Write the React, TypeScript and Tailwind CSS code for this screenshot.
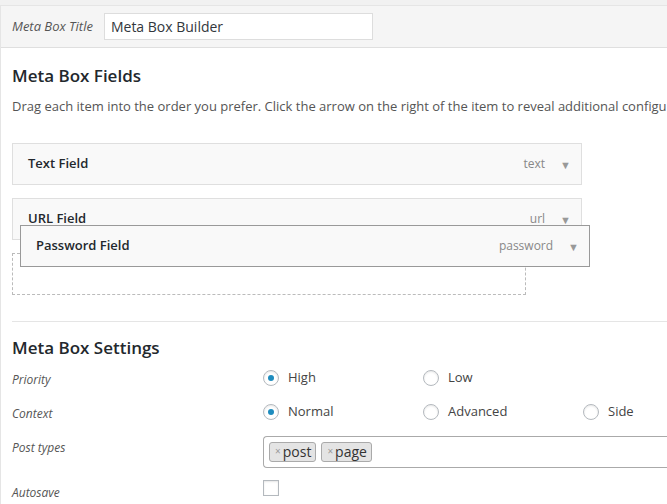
import React from "react";

const fieldItems = [
    { label: "Text Field", type: "text" },
    { label: "URL Field", type: "url" },
];

function Arrow() {
    return <span className="text-[11px] leading-none text-[#999]">▼</span>;
}

function FieldItem({ label, type, dragging }: { label: string; type: string; dragging?: boolean }) {
    return (
        <div
            className={
                "h-[42px] w-[570px] flex items-center justify-between bg-[#f9f9f9] border pl-[15px] pr-[10px] " +
                (dragging ? "border-[#999]" : "border-[#dfdfdf] mb-[13px]")
            }
        >
            <span className="text-[13px] font-semibold text-[#23282d]">{label}</span>
            <span className="flex items-center gap-[15px]">
                <span className="text-[12px] text-[#888]">{type}</span>
                <Arrow />
            </span>
        </div>
    );
}

function Radio({ label, checked }: { label: string; checked?: boolean }) {
    return (
        <label className="w-[160px] flex-none flex items-center gap-[9px]">
            <span className="w-4 h-4 flex-none rounded-full border border-[#b4b9be] bg-white shadow-[inset_0_1px_2px_rgba(0,0,0,0.1)] flex items-center justify-center">
                {checked && <span className="w-[6px] h-[6px] rounded-full bg-[#1e8cbe]" />}
            </span>
            <span className="text-[13px] text-[#444]">{label}</span>
        </label>
    );
}

function Tag({ text }: { text: string }) {
    return (
        <span className="h-[20px] flex items-center gap-[2px] pl-[5px] pr-[4px] bg-[#e4e4e4] border border-[#aaa] rounded-[3px]">
            <span className="text-[10px] text-[#999]">×</span>
            <span className="text-[14px] text-[#333] leading-none">{text}</span>
        </span>
    );
}

function Label({ children, className }: { children: React.ReactNode; className?: string }) {
    return <div className={"w-[251px] flex-none text-[12px] italic text-[#555] leading-[18px] " + (className || "")}>{children}</div>;
}

export default function App() {
    return (
        <div className="w-[667px] h-[504px] overflow-hidden bg-[#f1f1f1] pt-[5px] font-['Open_Sans',sans-serif]">
            <div className="h-full bg-white border-l border-t border-[#e5e5e5]">
                <div className="h-[42px] bg-[#f5f5f5] border-b border-[#dfdfdf] flex items-center pl-[11px] gap-[11px]">
                    <span className="text-[13px] italic text-[#555]">Meta Box Title</span>
                    <div className="w-[269px] h-[27px] bg-white border border-[#ddd] flex items-center px-[6px] text-[14px] text-[#32373c]">
                        Meta Box Builder
                    </div>
                </div>

                <div className="pl-[11px]">
                    <h2 className="mt-[16px] text-[17px] font-semibold text-[#23282d] leading-[24px]">Meta Box Fields</h2>
                    <p className="mt-[9px] text-[13px] text-[#555] whitespace-nowrap leading-[18px]">
                        Drag each item into the order you prefer. Click the arrow on the right of the item to reveal additional configu
                    </p>

                    <div className="relative mt-[28px]">
                        {fieldItems.map(f => (
                            <FieldItem key={f.label} label={f.label} type={f.type} />
                        ))}
                        <div className="w-[514px] h-[42px] border border-dashed border-[#bbb]" />
                        <div className="absolute left-[8px] top-[82px]">
                            <FieldItem label="Password Field" type="password" dragging />
                        </div>
                    </div>

                    <div className="mt-[26px] border-t border-[#e5e5e5]" />

                    <h2 className="mt-[14px] text-[17px] font-semibold text-[#23282d] leading-[24px]">Meta Box Settings</h2>

                    <div className="mt-[1px]">
                        <div className="h-[34px] flex items-center">
                            <Label className="pt-[4px]">Priority</Label>
                            <Radio label="High" checked />
                            <Radio label="Low" />
                        </div>
                        <div className="h-[34px] flex items-center">
                            <Label className="pt-[4px]">Context</Label>
                            <Radio label="Normal" checked />
                            <Radio label="Advanced" />
                            <Radio label="Side" />
                        </div>
                        <div className="h-[44px] flex items-start">
                            <Label className="pt-[10px]">Post types</Label>
                            <div className="mt-[7px] flex-1 h-[32px] border border-[#aaa] border-r-0 rounded-l-[4px] bg-white flex items-center gap-[5px] px-[5px] pb-[1px]">
                                <Tag text="post" />
                                <Tag text="page" />
                            </div>
                        </div>
                        <div className="h-[34px] flex items-start">
                            <Label className="pt-[11px]">Autosave</Label>
                            <span className="mt-[7px] w-4 h-4 border border-[#b4b9be] bg-white shadow-[inset_0_1px_2px_rgba(0,0,0,0.1)]" />
                        </div>
                    </div>
                </div>
            </div>
        </div>
    );
}
